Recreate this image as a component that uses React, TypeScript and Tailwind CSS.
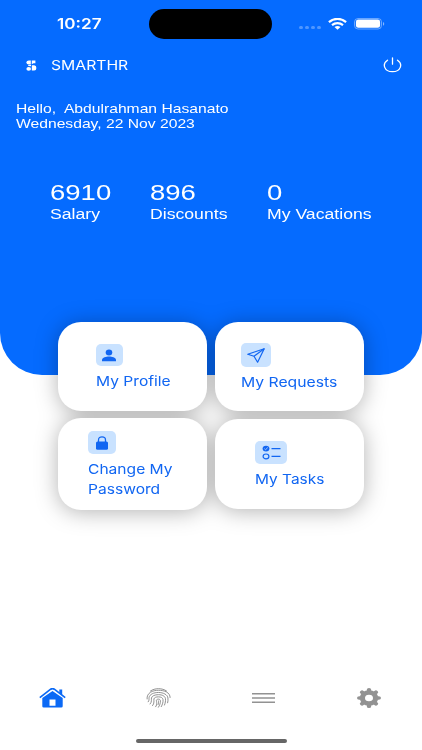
import { ReactNode } from "react";
import clsx from "clsx";

const helvetica = "font-['Liberation_Sans',sans-serif]";
const inter = "font-['Inter',sans-serif]";

interface LabelProps {
  className?: string;
  children: ReactNode;
}

// Wide lettering used all over the app
const Label = ({ className, children }: LabelProps) => (
  <span className={clsx("block w-max origin-left whitespace-pre", className)}>{children}</span>
);

const StatusBar = () => (
  <div className="flex h-12 pt-[9px]">
    <div className="w-[149px] pl-[57px] pt-[5px]">
      <Label className={clsx(inter, "text-[14.5px] leading-5 font-semibold scale-x-[1.18]")}>10:27</Label>
    </div>
    <div className="w-[123px] h-[30px] rounded-full bg-black" />
    <div className="flex pl-[27px] pt-[9px]">
      <div className="flex gap-[2px] pt-[8px]">
        {[0, 1, 2, 3].map((dot) => (
          <span key={dot} className="w-1 h-[3px] rounded-full bg-white/30" />
        ))}
      </div>
      <svg className="ml-[7px] w-[19px] h-[12px]" viewBox="0 0 19 12" fill="none" stroke="white" strokeWidth="2.200">
        <path d="M.9 4.100C5.700-.2 13.300-.2 18.100 4.100" />
        <path d="M4 7.200C7.200 4.500 11.800 4.500 15 7.200" />
        <path d="M6.500 9Q9.500 6.900 12.500 9L9.500 11.700Z" fill="white" stroke="none" />
      </svg>
      <svg className="ml-[7px] w-[31px] h-[12px]" viewBox="0 0 31 12" fill="white">
        <rect x=".5" y=".5" width="27" height="10.500" rx="3.500" fill="none" stroke="white" strokeOpacity=".4" />
        <rect x="1.900" y="1.600" width="24.200" height="8.200" rx="2.400" />
        <path d="M29 4v3.800c1.700-.5 1.700-3.300 0-3.800Z" fillOpacity=".5" />
      </svg>
    </div>
  </div>
);

const stats = [
  { value: "6910", name: "Salary", width: "w-[100px]" },
  { value: "896", name: "Discounts", width: "w-[117px]" },
  { value: "0", name: "My Vacations", width: "w-[110px]" },
];

const PersonIcon = () => (
  <svg className="w-[14px] h-[13px]" viewBox="0 0 14 13" fill="currentColor">
    <ellipse cx="7" cy="3.400" rx="3.300" ry="3" />
    <path d="M0 12.200V11C.3 8.500 4 7.600 7 7.600S13.700 8.500 14 11V12.200Z" />
  </svg>
);

const SendIcon = () => (
  <svg className="w-[18px] h-[15px]" viewBox="0 0 18 15" fill="none" stroke="currentColor" strokeWidth="1.200" strokeLinejoin="round">
    <path d="M.7 6.300 17.200.7 10.600 14.200 7 8.300Z" />
    <path d="M7 8.300 17.200.7" />
  </svg>
);

const LockIcon = () => (
  <svg className="w-3 h-[14px]" viewBox="0 0 12 14" fill="currentColor">
    <path d="M2.500 6V3.900C2.500-.2 9.500-.2 9.500 3.900V6" fill="none" stroke="currentColor" strokeWidth="1.300" />
    <rect y="5.500" width="12" height="8.300" rx="1.500" />
  </svg>
);

const TasksIcon = () => (
  <svg className="w-[19px] h-[15px]" viewBox="0 0 19 15" fill="none" stroke="currentColor" strokeWidth="1.200">
    <ellipse cx="4" cy="3.600" rx="3.400" ry="2.900" fill="currentColor" stroke="none" />
    <path d="m2.400 3.700 1.200 1 2.200-2.200" stroke="#c9e2ff" strokeWidth=".8" />
    <ellipse cx="4" cy="11.400" rx="2.900" ry="2.400" />
    <path d="M9.500 3.600h9M9.500 11.400h9" />
  </svg>
);

const cards = [
  {
    title: "My Profile",
    box: "mt-0 h-[89px] pl-[37.5px] pt-[22px]",
    badge: "w-[27px] h-[22px]",
    text: "mt-[5px] leading-5 scale-x-[1.155]",
    icon: <PersonIcon />,
  },
  {
    title: "My Requests",
    box: "mt-0 h-[89px] pl-[26px] pt-[21px]",
    badge: "w-[30px] h-6",
    text: "mt-[5px] leading-5 scale-x-[1.165]",
    icon: <SendIcon />,
  },
  {
    title: "Change My\nPassword",
    box: "mt-[7px] h-[92px] pl-[30px] pt-[13px]",
    badge: "w-7 h-[23px]",
    text: "mt-[6px] leading-[19.5px] scale-x-[1.155]",
    icon: <LockIcon />,
  },
  {
    title: "My Tasks",
    box: "mt-2 h-[90px] pl-[40px] pt-[22px]",
    badge: "w-8 h-[23px]",
    text: "mt-[5px] leading-5 scale-x-[1.145]",
    icon: <TasksIcon />,
  },
];

const HomeIcon = () => (
  <svg className="w-[27px] h-5" viewBox="0 0 27 20" fill="#0b69f5">
    <path d="M.8 9.600 11.700 1.200Q13.500-.1 15.300 1.200L26.200 9.600" fill="none" stroke="#0b69f5" strokeWidth="1.700" />
    <path d="M20.300 1.500h2.900v5.500l-2.900-2.200Z" />
    <path fillRule="evenodd" d="M3.300 9.900 13.500 2.900 23.700 9.900V18.300Q23.700 19.600 22.300 19.600H4.700Q3.300 19.600 3.300 18.300ZM10.500 11.500V17.800H16.500V11.500Z" />
  </svg>
);

const FingerprintIcon = () => (
  <svg className="w-[25px] h-[20px]" viewBox="0 0 26 21" fill="none" stroke="#868686" strokeWidth=".95" strokeLinecap="round">
    <path d="M4.500 3.200C9.200-.2 16.800-.2 21.500 3.200" />
    <path d="M1 11.500C.3 5 7 2.400 13 2.400S25.300 4.500 25.200 10" />
    <path d="M2.200 14.500C3.500 12.800 2.900 11.500 3.100 10 3.700 6.600 8 4.700 13 4.700S22.600 7 22.900 10.500C23.100 12.500 23 14 22.600 15.500" />
    <path d="M4.200 16.800C6.300 14.500 5.300 12 5.600 10.500 6.200 8.300 9 7 13 7S20 8.600 20.300 11.200C20.600 13.500 20.100 15.900 19.300 17.900" />
    <path d="M6.800 18.500C9 16 7.900 13.200 8.200 11.500 8.500 10 10.400 9.300 13 9.300S17.400 10.200 17.700 12C18.100 14.700 17.200 17.200 15.900 19.600" />
    <path d="M10 19.700C12.200 17 10.700 14.500 10.800 13 10.900 11.200 14.900 11.200 15 13.300 15.200 15.900 14.200 18.200 12.900 20.200" />
    <path d="M12.900 13.500C13.200 15 13.100 16.200 12.600 17.400" />
  </svg>
);

const GearIcon = () => (
  <svg className="w-6 h-5" viewBox="-12 -12 24 24" preserveAspectRatio="none" fill="none" stroke="#929292">
    <circle r="6.600" strokeWidth="5.200" />
    {[0, 45, 90, 135].map((angle) => (
      <path key={angle} d="M0-9.800V-7M0 7V9.800" strokeWidth="4.400" strokeLinecap="round" transform={`rotate(${angle})`} />
    ))}
  </svg>
);

const App = () => {
  return (
    <div className="relative w-[422px] h-[750px] overflow-hidden bg-white">
      <header className="h-[375px] rounded-b-[42px] bg-[#056bff] text-white">
        <StatusBar />
        <div className="flex items-center h-[34px] pl-[26px] pr-5">
          <svg className="w-[11px] h-[11px]" viewBox="0 0 11 11" fill="white">
            <path d="M4.800.4V4.500H2.800Q.4 4.500.4 2.500T2.800.4Z" />
            <path d="M5.800.4H9.400V3.200H7.500L5.800 4.200Z" />
            <path d="M5.800 5.200H8.200Q10.400 5.500 10.400 8T8.200 10.600H5.800Z" />
            <path d="M2 5H5V6.200L2.500 5.900Z" />
            <ellipse cx="2.700" cy="8.900" rx="2.300" ry="1.800" />
          </svg>
          <Label className={clsx(inter, "ml-[13.5px] text-[13.5px] leading-5 scale-x-[1.165]")}>SMARTHR</Label>
          <svg className="ml-auto w-[19px] h-4" viewBox="0 0 19 16" fill="none" stroke="white" strokeWidth="1.300" strokeLinecap="round">
            <path d="M4.500 3.200C-1.200 7 1.200 14.700 9.500 14.700S20.200 7 14.500 3.200M9.500.8v6.400" />
          </svg>
        </div>
        <div className={clsx(helvetica, "pl-4 pt-[19px] text-[13px] leading-[15px]")}>
          <Label className="scale-x-[1.205]">{"Hello,  Abdulrahman Hasanato"}</Label>
          <Label className="scale-x-[1.205]">Wednesday, 22 Nov 2023</Label>
        </div>
        <div className={clsx(helvetica, "flex pl-[50px] pt-[49px]")}>
          {stats.map((stat) => (
            <div key={stat.name} className={stat.width}>
              <Label className="text-[22px] leading-[26px] scale-x-[1.25]">{stat.value}</Label>
              <Label className="text-[14px] leading-[17px] scale-x-[1.26]">{stat.name}</Label>
            </div>
          ))}
        </div>
      </header>

      <main className="relative -mt-[53px] mx-[58px] grid grid-cols-[149px_149px] gap-x-2 drop-shadow-[0_2px_11px_rgba(0,0,0,0.3)]">
        {cards.map((card) => (
          <button key={card.title} className={clsx("flex flex-col items-start rounded-[23px] bg-white text-left text-[#1166f2]", card.box)}>
            <span className={clsx("flex items-center justify-center rounded-[5px] bg-[#c9e2ff]", card.badge)}>{card.icon}</span>
            <Label className={clsx(inter, "text-[13.5px]", card.text)}>{card.title}</Label>
          </button>
        ))}
      </main>

      <nav className="mt-[178px] grid grid-cols-4 justify-items-center">
        <HomeIcon />
        <FingerprintIcon />
        <svg className="w-[23px] h-5" viewBox="0 0 23 20" stroke="#929292" strokeWidth="1.400">
          <path d="M0 5.700h23M0 10h23M0 14.300h23" />
        </svg>
        <GearIcon />
      </nav>
      <div className="mt-[31px] mx-auto w-[151px] h-1 rounded-full bg-[#666666]" />
    </div>
  );
};

export default App;
